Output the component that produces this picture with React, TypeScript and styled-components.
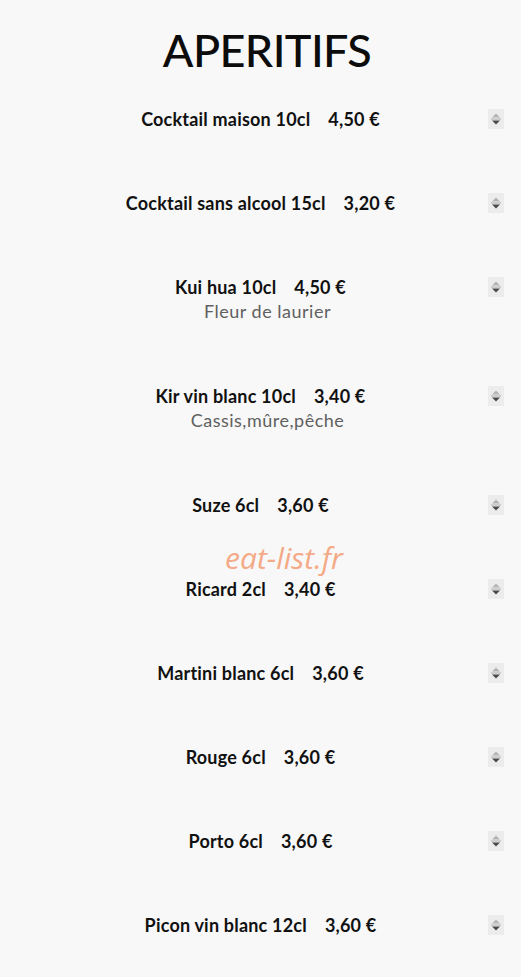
import React from 'react';
import styled, { createGlobalStyle } from 'styled-components';

const GlobalStyle = createGlobalStyle`
  body {
    margin: 0;
    background: #f8f8f8;
    font-family: Lato, "Noto Sans", sans-serif;
    color: #111;
  }
`;

interface Item {
  name: string;
  price: string;
  desc?: string;
}

const items: Item[] = [
  { name: 'Cocktail maison 10cl', price: '4,50 €' },
  { name: 'Cocktail sans alcool 15cl', price: '3,20 €' },
  { name: 'Kui hua 10cl', price: '4,50 €', desc: 'Fleur de laurier' },
  { name: 'Kir vin blanc 10cl', price: '3,40 €', desc: 'Cassis,mûre,pêche' },
  { name: 'Suze 6cl', price: '3,60 €' },
  { name: 'Ricard 2cl', price: '3,40 €' },
  { name: 'Martini blanc 6cl', price: '3,60 €' },
  { name: 'Rouge 6cl', price: '3,60 €' },
  { name: 'Porto 6cl', price: '3,60 €' },
  { name: 'Picon vin blanc 12cl', price: '3,60 €' },
];

const Page = styled.main`
  position: relative;
  width: 521px;
  min-height: 977px;
`;

const Title = styled.h1`
  margin: 0;
  padding: 27px 0 34px 13px;
  text-align: center;
  font-size: 45px;
  line-height: 46px;
  font-weight: 500;
  letter-spacing: -0.6px;
  color: #0c0c0c;
`;

const List = styled.ul`
  list-style: none;
  margin: 0;
  padding: 0;
`;

const Entry = styled.li`
  margin-bottom: 60px;
`;

const Row = styled.div`
  display: grid;
  grid-template-columns: 1fr auto 1fr;
  align-items: center;
  height: 24px;
`;

const Label = styled.div`
  grid-column: 2;
  display: flex;
  gap: 18px;
  font-size: 18px;
  font-weight: 700;
  letter-spacing: 0.2px;
  white-space: nowrap;
`;

const Price = styled.span`
  font-weight: 700;
`;

const Desc = styled.div`
  padding-left: 14px;
  text-align: center;
  font-size: 18px;
  line-height: 25px;
  font-weight: 400;
  color: #606060;
  letter-spacing: 0.5px;
`;

const Spinner = styled.div`
  grid-column: 3;
  justify-self: end;
  margin-right: 17px;
  width: 16px;
  height: 20px;
  background: #ececec;
  display: flex;
  align-items: center;
  justify-content: center;
`;

const Watermark = styled.div`
  position: absolute;
  top: 537px;
  left: 225px;
  font-family: "Open Sans", sans-serif;
  font-style: italic;
  font-size: 30px;
  color: #f4a27a;
  opacity: 0.9;
`;

const SpinIcon = () => (
  <svg width="12" height="16" viewBox="0 0 12 16">
    <path d="M6 2.5 L10 6.5 H2 Z" fill="#b4b4b4" />
    <rect x="1" y="7.6" width="10" height="0.8" fill="#a0a0a0" />
    <path d="M2 9.5 H10 L6 13.5 Z" fill="#4a4a4a" />
  </svg>
);

export default function App() {
  return (
    <Page>
      <GlobalStyle />
      <Title>APERITIFS</Title>
      <List>
        {items.map((it) => (
          <Entry key={it.name}>
            <Row>
              <Label>
                <span>{it.name}</span>
                <Price>{it.price}</Price>
              </Label>
              <Spinner>
                <SpinIcon />
              </Spinner>
            </Row>
            {it.desc && <Desc>{it.desc}</Desc>}
          </Entry>
        ))}
      </List>
      <Watermark>eat-list.fr</Watermark>
    </Page>
  );
}
